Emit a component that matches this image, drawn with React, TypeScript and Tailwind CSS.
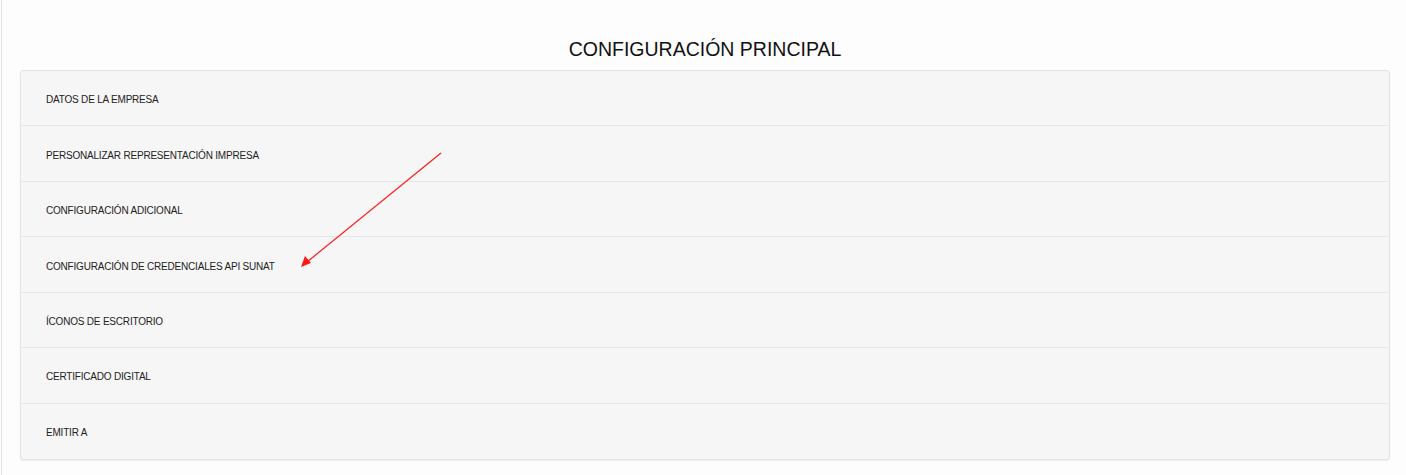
import React from "react";

const items = [
  "DATOS DE LA EMPRESA",
  "PERSONALIZAR REPRESENTACIÓN IMPRESA",
  "CONFIGURACIÓN ADICIONAL",
  "CONFIGURACIÓN DE CREDENCIALES API SUNAT",
  "ÍCONOS DE ESCRITORIO",
  "CERTIFICADO DIGITAL",
  "EMITIR A",
];

export default function App() {
  return (
    <div
      className="relative w-[1406px] h-[475px] bg-[#fdfdfd] overflow-hidden"
      style={{ fontFamily: '"Liberation Sans", Arial, sans-serif' }}
    >
      <div className="ml-px h-full border-l border-[#e2e2e2] pl-[18px] pr-[16px] pt-[37px]">
        <h1 className="text-center text-[19.5px] leading-[24px] text-[#111] mb-[9px]">
          CONFIGURACIÓN PRINCIPAL
        </h1>
        <div className="rounded-[3px] border border-[#e3e3e3] bg-[#f6f6f6] shadow-[0_1px_1px_rgba(0,0,0,0.05)]">
          {items.map((t, i) => (
            <div
              key={t}
              className={`flex items-center h-[55.45px] pl-[25px] pt-[3px] text-[10px] tracking-[-0.2px] text-[#222] ${
                i < items.length - 1 ? "border-b border-[#e6e6e6]" : ""
              }`}
            >
              {t}
            </div>
          ))}
        </div>
      </div>
      <svg
        className="absolute left-0 top-0 pointer-events-none"
        width="1406"
        height="475"
      >
        <line x1="441" y1="153" x2="307" y2="262" stroke="#ff1a1a" strokeWidth="1.2" />
        <polygon points="301,267 305,256 311,263" fill="#ff1a1a" />
      </svg>
    </div>
  );
}
